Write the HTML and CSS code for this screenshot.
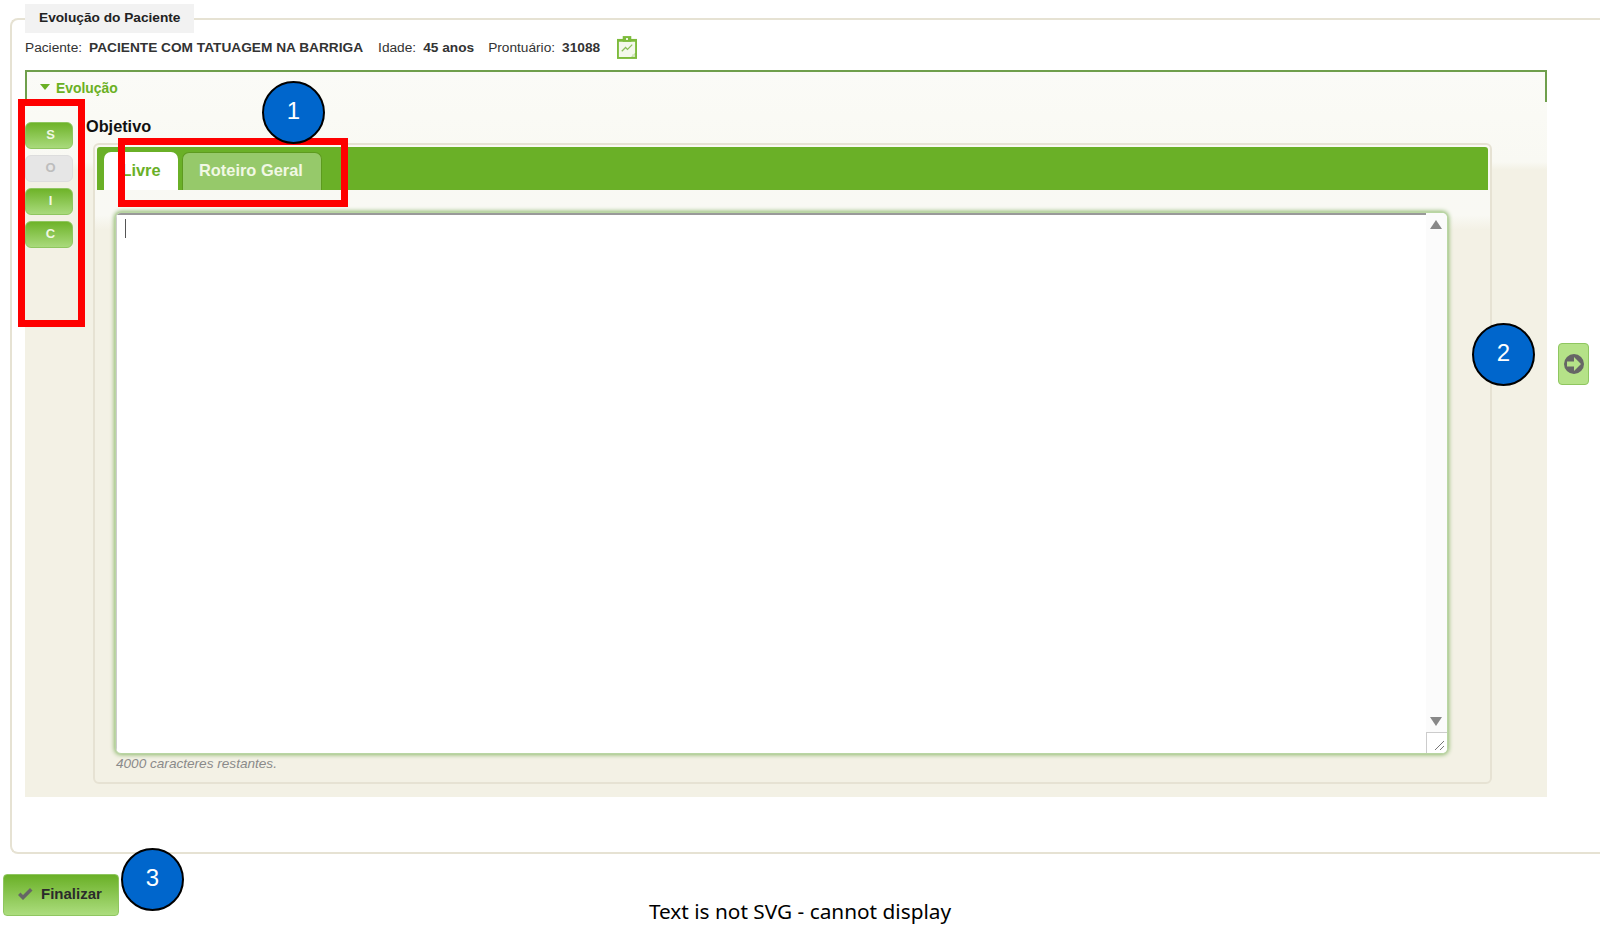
FILE: index.html
```html
<!DOCTYPE html>
<html lang="pt-br">
<head>
    <meta charset="UTF-8">
    <title>Evolução do Paciente</title>
    <link rel="stylesheet" href="styles.css">
</head>
<body>
    <div class="page">
        <fieldset class="card">
            <legend class="card-title">Evolução do Paciente</legend>

            <div class="patient">
                <span>Paciente:</span><b class="name">PACIENTE COM TATUAGEM NA BARRIGA</b>
                <span>Idade:</span><b class="age">45 anos</b>
                <span>Prontuário:</span><b class="record">31088</b>
                <svg class="chart-icon" width="20" height="23" viewBox="0 0 21 24">
                    <path d="M0 3h21v21H0z" fill="#7dbb3c"/>
                    <path d="M2 6h17v12l-4 4H2z" fill="#f4f8ec"/>
                    <path d="M6 0h9v6H6z" fill="#7dbb3c"/>
                    <path d="M9.500 2h2v2h-2z" fill="#f4f8ec"/>
                    <path d="M5 16l4-4 2 2 5-5" fill="none" stroke="#8abf58" stroke-width="1.300"/>
                    <path d="M16 19h3v3h-3z" fill="#d5e8c0"/>
                </svg>
            </div>

            <div class="evolution-row">
                <section class="panel">
                    <div class="panel-head">
                        <span class="arrow-down"></span>
                        <span class="panel-title">Evolução</span>
                    </div>
                    <div class="panel-body">
                        <div class="soic">
                            <div class="soic-btn">S</div>
                            <div class="soic-btn off">O</div>
                            <div class="soic-btn">I</div>
                            <div class="soic-btn">C</div>
                        </div>
                        <div class="content">
                            <h2 class="content-title">Objetivo</h2>
                            <div class="tabs-box">
                                <div class="tabs">
                                    <div class="tab active">Livre</div>
                                    <div class="tab">Roteiro Geral</div>
                                </div>
                                <div class="editor">
                                    <div class="typing"><span class="caret"></span></div>
                                    <div class="scroll">
                                        <span class="scroll-up"></span>
                                        <span class="scroll-down"></span>
                                        <span class="grip">
                                            <svg width="20" height="20" viewBox="0 0 20 20">
                                                <path d="M8 17l9-9M13 17l4-4" stroke="#777" stroke-width="1" fill="none"/>
                                            </svg>
                                        </span>
                                    </div>
                                </div>
                                <p class="counter">4000 caracteres restantes.</p>
                            </div>
                        </div>
                    </div>
                </section>
                <div class="next-btn">
                    <svg width="22" height="22" viewBox="0 0 22 22">
                        <circle cx="11" cy="11" r="10" fill="#666"/>
                        <path d="M4 8.500h7V4l7 7-7 7v-4.500H4z" fill="#b5e288"/>
                    </svg>
                </div>
            </div>
        </fieldset>

        <div class="finish-btn">
            <svg width="16" height="14" viewBox="0 0 16 14">
                <path d="M1 8l2.500-2.500L6 8l7-7 2.500 2.500L6 13z" fill="#666"/>
            </svg>
            Finalizar
        </div>
        <p class="caption">Text is not SVG - cannot display</p>

        <div class="mark mark-side"></div>
        <div class="mark mark-tabs"></div>
        <div class="bubble bubble-1">1</div>
        <div class="bubble bubble-2">2</div>
        <div class="bubble bubble-3">3</div>
    </div>
</body>
</html>
```

FILE: styles.css
```css
html, body {
    margin: 0;
    padding: 0;
    background: #fff;
}
.page {
    position: relative;
    width: 1600px;
    height: 928px;
    overflow: hidden;
    font-family: "Liberation Sans", Arial, sans-serif;
    color: #333;
}
.card {
    box-sizing: border-box;
    width: 1600px;
    height: 850px;
    margin: 4px 0 0 10px;
    padding: 0 0 0 13px;
    border: 2px solid #e6e2d3;
    border-right: 0;
    border-radius: 8px 0 0 8px;
}
.card-title {
    box-sizing: border-box;
    width: 169px;
    height: 29px;
    margin-left: 0;
    padding: 0 0 0 14px;
    background: #f2f2f2;
    font-size: 13.700px;
    font-weight: bold;
    line-height: 27px;
    color: #222;
}
.patient {
    display: flex;
    align-items: center;
    height: 24px;
    margin-top: 2px;
    font-size: 13.700px;
}
.patient b {
    color: #333;
}
.name {
    margin: 0 15px 0 7px;
}
.age {
    margin: 0 14px 0 7px;
}
.record {
    margin: 0 17px 0 7px;
}
.chart-icon {
    display: block;
}

.evolution-row {
    display: flex;
    align-items: flex-start;
    margin-top: 11px;
}
.panel {
    width: 1522px;
    height: 727px;
    background: linear-gradient(#fbfbf7 0, #f9f9f3 92px, #f3f1e5 100px);
}
.panel-head {
    box-sizing: border-box;
    display: flex;
    align-items: center;
    height: 32px;
    padding: 1px 0 0 13px;
    border: 2px solid #6f9f4c;
    border-bottom: 0;
}
.arrow-down {
    width: 0;
    height: 0;
    margin-top: -2px;
    border-left: 5px solid transparent;
    border-right: 5px solid transparent;
    border-top: 6px solid #6ab023;
}
.panel-title {
    margin-left: 6px;
    font-size: 13.900px;
    font-weight: bold;
    color: #6ab023;
}
.panel-body {
    display: flex;
}

.soic {
    display: flex;
    flex-direction: column;
    gap: 6px;
    width: 61px;
    padding-top: 20px;
}
.soic-btn {
    box-sizing: border-box;
    width: 48px;
    height: 27px;
    padding-left: 3px;
    border: 1px solid #8fc660;
    border-radius: 6px;
    background: linear-gradient(#6eb329, #a9da7c);
    font-size: 13px;
    font-weight: bold;
    line-height: 23px;
    text-align: center;
    color: #f1f8e4;
}
.soic-btn.off {
    border-color: #ddd;
    background: #e6e6e6;
    color: #bdbdbd;
}

.content {
    width: 1406px;
}
.content-title {
    height: 41px;
    margin: 0;
    padding-top: 14px;
    box-sizing: border-box;
    font-size: 16.300px;
    font-weight: bold;
    line-height: 20px;
    color: #111;
}
.tabs-box {
    box-sizing: border-box;
    width: 1399px;
    height: 641px;
    margin-left: 7px;
    padding: 2px 2px 0;
    border: 2px solid #e6e2d3;
    border-radius: 6px;
    background: linear-gradient(#f9f9f3 0, #f9f9f4 70px, #f3f1e5 85px);
}
.tabs {
    display: flex;
    align-items: flex-end;
    gap: 4px;
    height: 43px;
    padding-left: 7px;
    background: #6ab027;
    border-radius: 3px 3px 0 0;
}
.tab {
    box-sizing: border-box;
    height: 38px;
    padding: 0 18px 0 16px;
    border: 1px solid #5d9a1f;
    border-bottom: 0;
    border-radius: 7px 7px 0 0;
    background: #96c96a;
    font-size: 16.400px;
    font-weight: bold;
    line-height: 34px;
    color: #f1f8e4;
}
.tab.active {
    width: 74px;
    padding: 0;
    border: 0;
    background: #fff;
    line-height: 36px;
    text-align: center;
    color: #6ab027;
}

.editor {
    box-sizing: border-box;
    display: flex;
    width: 1333px;
    height: 542px;
    margin: 22px 0 0 18px;
    border: 1px solid #b9d6a3;
    border-radius: 6px;
    background: #fff;
    box-shadow: 0 0 4px 1px #8fb96f;
    overflow: hidden;
}
.typing {
    flex: 1;
    border-top: 2px solid #999;
    border-left: 1px solid #ccc;
    padding: 4px 0 0 8px;
}
.caret {
    display: block;
    width: 1px;
    height: 19px;
    background: #555;
}
.scroll {
    position: relative;
    width: 21px;
    background: #fbfbfb;
}
.scroll-up {
    position: absolute;
    top: 7px;
    left: 4px;
    width: 0;
    height: 0;
    border-left: 6px solid transparent;
    border-right: 6px solid transparent;
    border-bottom: 9px solid #888;
}
.scroll-down {
    position: absolute;
    bottom: 27px;
    left: 4px;
    width: 0;
    height: 0;
    border-left: 6px solid transparent;
    border-right: 6px solid transparent;
    border-top: 9px solid #888;
}
.grip {
    position: absolute;
    right: 0;
    bottom: 0;
    width: 20px;
    height: 20px;
    border-top: 1px solid #ccc;
    border-left: 1px solid #ccc;
    background: #fff;
}
.grip svg {
    display: block;
}
.counter {
    margin: 2px 0 0 19px;
    font-size: 13.600px;
    font-style: italic;
    line-height: 16px;
    color: #8a8a8a;
}

.next-btn {
    box-sizing: border-box;
    display: flex;
    align-items: center;
    justify-content: center;
    width: 31px;
    height: 42px;
    margin: 273px 0 0 11px;
    border: 1px solid #8fc660;
    border-radius: 4px;
    background: #b5e288;
}

.finish-btn {
    box-sizing: border-box;
    display: flex;
    align-items: center;
    gap: 8px;
    width: 116px;
    height: 42px;
    margin: 20px 0 0 3px;
    padding: 0 0 3px 13px;
    border: 1px solid #8fc660;
    border-radius: 4px;
    background: linear-gradient(#6ab027, #acdd7e);
    font-size: 15px;
    font-weight: bold;
    color: #2b2b2b;
}
.caption {
    position: absolute;
    left: 0;
    right: 0;
    top: 898px;
    margin: 0;
    font-family: "Noto Sans", sans-serif;
    font-size: 20.800px;
    line-height: 26px;
    text-align: center;
    color: #000;
}

/* marcacoes por cima da tela */
.mark {
    position: absolute;
    box-sizing: border-box;
    border: 7px solid #fe0000;
}
.mark-side {
    left: 18px;
    top: 99px;
    width: 67px;
    height: 228px;
}
.mark-tabs {
    left: 118px;
    top: 138px;
    width: 230px;
    height: 69px;
}
.bubble {
    position: absolute;
    box-sizing: border-box;
    width: 63px;
    height: 63px;
    border: 2px solid #000;
    border-radius: 50%;
    background: #0066cc;
    font-size: 24px;
    line-height: 55px;
    text-align: center;
    color: #fff;
}
.bubble-1 {
    left: 262px;
    top: 81px;
}
.bubble-2 {
    left: 1472px;
    top: 323px;
}
.bubble-3 {
    left: 121px;
    top: 848px;
}
```
